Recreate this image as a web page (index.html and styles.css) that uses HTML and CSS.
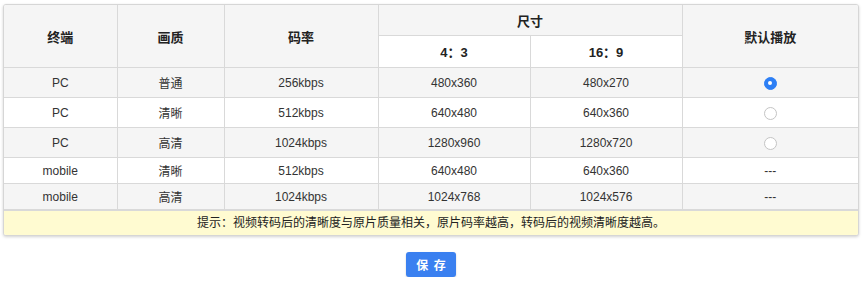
FILE: index.html
```html
<!DOCTYPE html>
<html lang="zh">
<head>
<meta charset="utf-8">
<link rel="stylesheet" href="styles.css">
</head>
<body>
<div class="page">
  <div class="panel">
    <table class="grid">
      <colgroup>
        <col class="c1"><col class="c2"><col class="c3"><col class="c4"><col class="c5"><col class="c6">
      </colgroup>
      <thead>
        <tr class="h1">
          <th rowspan="2">终端</th>
          <th rowspan="2">画质</th>
          <th rowspan="2">码率</th>
          <th colspan="2">尺寸</th>
          <th rowspan="2" class="last">默认播放</th>
        </tr>
        <tr class="h2">
          <th class="sub">4：3</th>
          <th class="sub">16：9</th>
        </tr>
      </thead>
      <tbody>
        <tr class="odd tall"><td>PC</td><td>普通</td><td>256kbps</td><td>480x360</td><td>480x270</td><td class="last"><span class="radio on"></span></td></tr>
        <tr class="tall"><td>PC</td><td>清晰</td><td>512kbps</td><td>640x480</td><td>640x360</td><td class="last"><span class="radio"></span></td></tr>
        <tr class="odd tall"><td>PC</td><td>高清</td><td>1024kbps</td><td>1280x960</td><td>1280x720</td><td class="last"><span class="radio"></span></td></tr>
        <tr class="short"><td>mobile</td><td>清晰</td><td>512kbps</td><td>640x480</td><td>640x360</td><td class="last">---</td></tr>
        <tr class="odd short"><td>mobile</td><td>高清</td><td>1024kbps</td><td>1024x768</td><td>1024x576</td><td class="last">---</td></tr>
      </tbody>
    </table>
    <div class="tip">提示：视频转码后的清晰度与原片质量相关，原片码率越高，转码后的视频清晰度越高。</div>
  </div>
  <div class="actions">
    <button class="btn" type="button">保 存</button>
  </div>
</div>
</body>
</html>
```

FILE: styles.css
```css
html, body {
  margin: 0;
  padding: 0;
  background: #fff;
}
body {
  font-family: "Liberation Sans", "Noto Sans CJK SC", sans-serif;
  font-size: 12px;
  color: #333;
}
.page {
  padding: 4px 7px 0 3px;
}
.panel {
  width: 856px;
  box-sizing: border-box;
  border: 1px solid #d6d6d6;
  border-radius: 3px;
  box-shadow: 0 1px 3px rgba(0,0,0,0.18);
  overflow: hidden;
  background: #fff;
}
.grid {
  width: 100%;
  border-collapse: collapse;
  table-layout: fixed;
}
.c1 { width: 113px; }
.c2 { width: 107px; }
.c3 { width: 154px; }
.c4 { width: 152px; }
.c5 { width: 152px; }
.c6 { width: auto; }
th, td {
  border: 1px solid #d9d9d9;
  text-align: center;
  padding: 0;
}
tr > :first-child { border-left: none; }
.last { border-right: none; }
thead tr:first-child th { border-top: none; }
th {
  background: #f5f5f5;
  font-weight: bold;
  font-size: 13px;
  color: #222;
}
.h1 th { height: 30px; }
.h2 th { height: 31px; }
th.sub {
  background: #fff;
}
.h2 th.sub:first-child { border-left: 1px solid #d9d9d9; }
td {
  color: #333;
  font-size: 12px;
}
tr.odd td { background: #f5f5f5; }
tr.tall td { height: 29px; }
tr.short td { height: 25px; }
.radio {
  display: inline-block;
  width: 11px;
  height: 11px;
  border-radius: 50%;
  border: 1px solid #c4c4c4;
  background: #fff;
  vertical-align: middle;
  box-sizing: content-box;
}
.radio.on {
  border-color: #2d7ff5;
  background: #2d7ff5;
  position: relative;
}
.radio.on::after {
  content: "";
  position: absolute;
  left: 3.5px;
  top: 3.5px;
  width: 4px;
  height: 4px;
  border-radius: 50%;
  background: #fff;
}
.tip {
  background: #fffbd1;
  border-top: 1px solid #d9d9d9;
  height: 24px;
  line-height: 24px;
  text-align: center;
  font-size: 12px;
  color: #222;
}
.actions {
  display: flex;
  justify-content: center;
  padding-top: 16px;
}
.btn {
  width: 50px;
  height: 25px;
  border: none;
  border-radius: 3px;
  background: #3a80f0;
  color: #fff;
  font-family: "Liberation Sans", "Noto Sans CJK SC", sans-serif;
  font-size: 12px;
  font-weight: bold;
  letter-spacing: 1px;
  padding: 0 0 0 1px;
  box-shadow: 0 1px 2px rgba(0,0,0,0.2);
}
```
